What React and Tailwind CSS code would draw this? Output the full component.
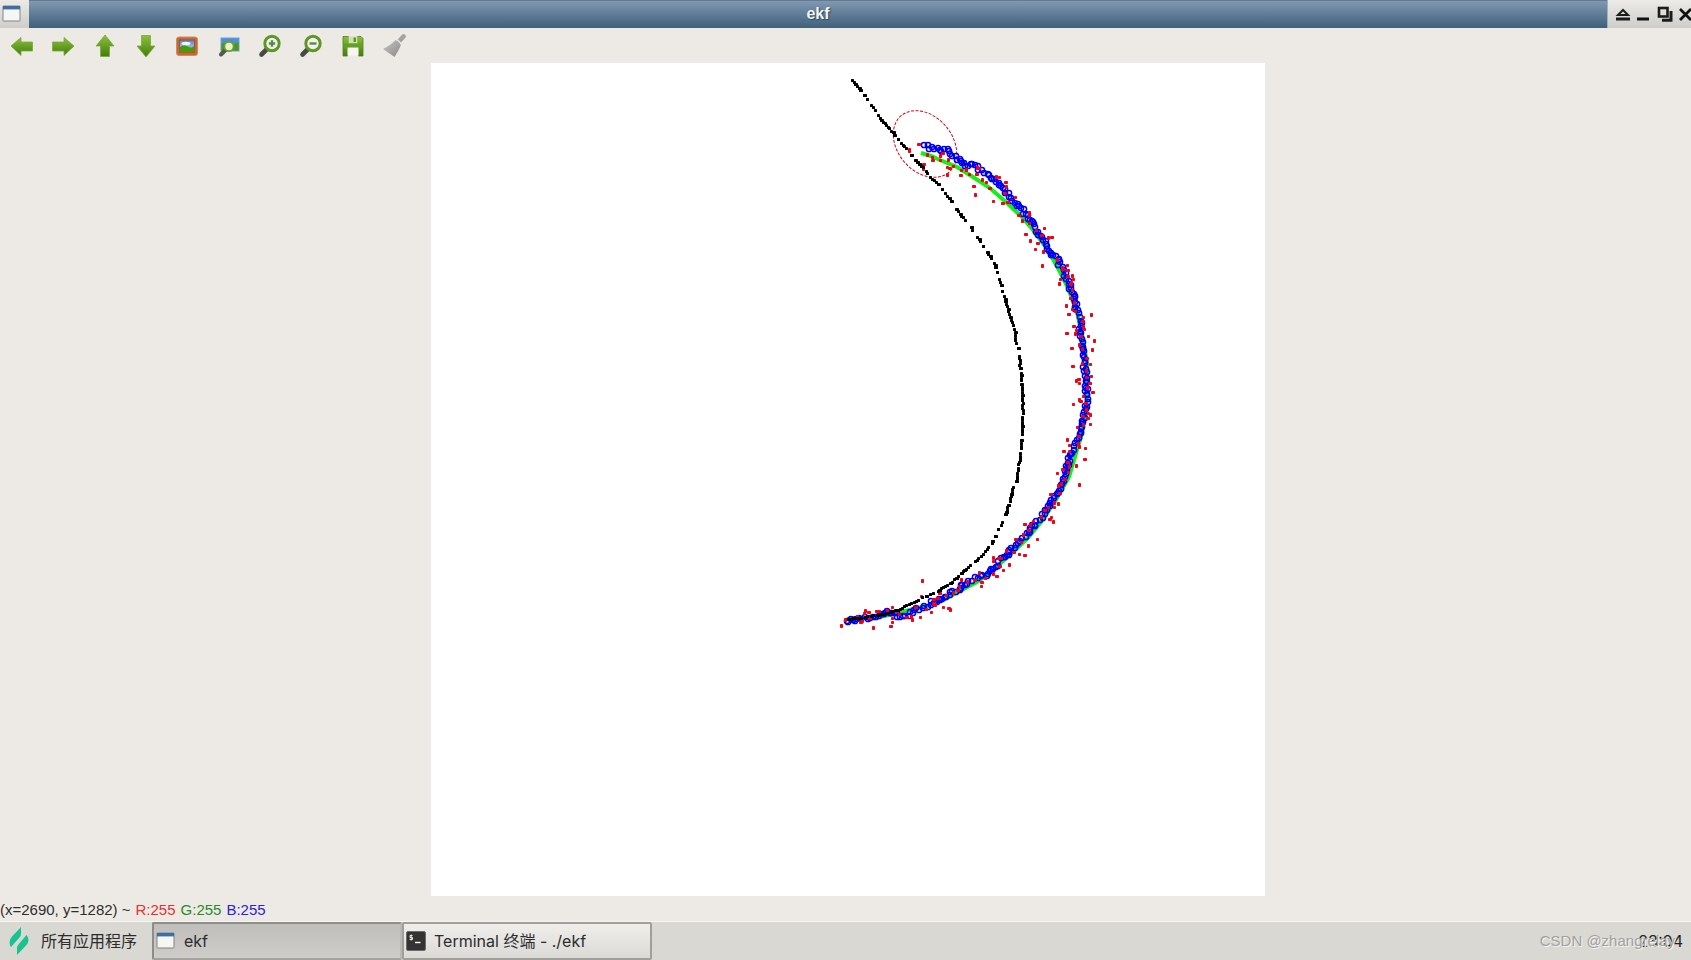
import React from "react";

function mulberry(seed) {
  let a = seed;
  return () => {
    a = (a + 0x6d2b79f5) | 0;
    let t = Math.imul(a ^ (a >>> 15), 1 | a);
    t = (t + Math.imul(t ^ (t >>> 7), 61 | t)) ^ t;
    return ((t ^ (t >>> 14)) >>> 0) / 4294967296;
  };
}

// Walks a polyline and returns points whose spacing is given by step().
function walk(points, step) {
  const out = [];
  let need = 0;
  for (let i = 0; i < points.length - 1; i++) {
    const [x1, y1] = points[i];
    const [x2, y2] = points[i + 1];
    const len = Math.hypot(x2 - x1, y2 - y1);
    let d = need;
    while (d < len) {
      const t = d / len;
      out.push([x1 + (x2 - x1) * t, y1 + (y2 - y1) * t, -(y2 - y1) / len, (x2 - x1) / len]);
      d += step();
    }
    need = d - len;
  }
  return out;
}

const TRUTH = [[921,153],[931,156],[940,160],[957,167],[973,177],[990,188],[1007,203],[1022,217],[1033,230],[1048,250],[1060,272],[1068,288],[1077,312],[1083,340],[1087,363],[1087,387],[1086,413],[1081,437],[1077,450],[1069,477],[1056,500],[1041,522],[1028,538],[1013,552],[990,573],[977,582],[960,591],[943,600],[927,606],[897,613],[880,617],[847,619]];

const ESTIMATE = [[925,144],[928,147],[937,148],[947,150],[955,158],[965,164],[977,167],[990,177],[997,180],[1003,188],[1012,200],[1025,213],[1033,225],[1042,238],[1050,251],[1057,259],[1066,277],[1075,302],[1079,317],[1081,333],[1084,353],[1085,373],[1087,388],[1086,407],[1083,422],[1078,435],[1073,450],[1068,463],[1063,480],[1057,492],[1048,508],[1040,519],[1032,527],[1020,542],[1003,558],[988,574],[977,578],[963,585],[957,590],[943,598],[920,608],[908,614],[898,615],[885,612],[873,617],[860,619],[844,621]];

const DEAD_RECKONING = [
  [852,80,860,90],[864,95,864,95],[867,99,867,99],[871,105,875,110],[878,115,880,118],[881,120,893,132],[894,135,894,135],[898,139,898,139],[901,143,906,148],[911,155,911,155],[915,160,923,167],[926,171,927,173],[930,177,938,184],[942,189,942,189],[945,193,949,198],[951,201,951,201],[956,209,965,220],[971,227,972,230],[977,237,980,241],[983,246,983,246],[987,252,991,258],[994,263,995,267],[997,272,997,272],[999,279,1001,285],[1002,291,1002,291],[1004,296,1009,314],[1010,317,1013,325],[1014,329,1016,343],[1018,348,1018,348],[1019,356,1020,368],[1021,373,1021,380],[1021,384,1023,413],[1022,417,1022,434],[1021,440,1021,448],[1020,453,1020,460],[1019,462,1016,481],[1013,487,1010,501],[1008,505,1005,514],[1002,522,1001,525],[998,529,998,529],[995,536,995,536],[992,541,992,543],[988,547,981,556],[978,558,975,561],[970,565,961,573],[958,576,950,583],[947,585,941,588],[939,590,938,591],[933,593,930,594],[926,596,926,596],[922,597,922,597],[918,600,909,604],[906,605,900,609],[897,610,890,612],[887,613,877,615],[873,615,865,617],[860,618,848,619],
];

const OUTLIERS = [[919,144],[909,149],[909,151],[924,164],[923,168],[947,167],[950,168],[947,174],[961,170],[961,175],[966,169],[969,174],[974,186],[975,194],[993,201],[1003,203],[927,154],[932,157],[933,160],[940,155],[940,160],[943,153],[948,159],[953,166],[977,174],[982,179],[986,182],[990,188],[996,176],[999,177],[1006,182],[1006,186],[1015,197],[1005,193],[1029,212],[1029,215],[1019,215],[1022,220],[1029,223],[1026,234],[1030,240],[1035,249],[1038,243],[1043,251],[1044,228],[1052,237],[1048,237],[1036,230],[1042,235],[977,167],[979,168],[1008,202],[1042,265],[1067,265],[1068,270],[1072,275],[1073,279],[1071,284],[1059,283],[1060,279],[1063,269],[1066,305],[1072,309],[1069,314],[1091,314],[1083,317],[1074,326],[1075,333],[1076,330],[1067,333],[1094,340],[1088,336],[1072,348],[1092,349],[1090,364],[1073,366],[1082,363],[1091,376],[1079,379],[1076,380],[1079,383],[1093,392],[1079,399],[1073,404],[1081,401],[1090,414],[1090,424],[1088,418],[1067,439],[1069,445],[1064,451],[1079,446],[1085,448],[1085,459],[1076,465],[1057,473],[1063,469],[1079,484],[1058,485],[1060,493],[1058,503],[1054,507],[1050,519],[1053,521],[1051,517],[1025,524],[1030,524],[1037,539],[1016,539],[1028,545],[1019,554],[1025,555],[993,557],[993,561],[999,558],[1009,564],[1003,570],[997,576],[979,572],[981,586],[982,582],[922,580],[921,596],[940,593],[961,579],[892,607],[879,611],[865,610],[864,613],[869,612],[873,627],[892,622],[891,626],[912,619],[920,617],[934,599],[935,604],[943,607],[949,608],[950,609],[931,612],[861,622],[841,625],[892,618],[907,617]];

const rnd = mulberry(11);
const BLUE = walk(ESTIMATE, () => 1 + rnd() * 3).map(([x, y, nx, ny]) => {
  const o = (rnd() - 0.5) * 4;
  return [Math.round(x + nx * o), Math.round(y + ny * o)];
});
const RED = OUTLIERS.concat(
  walk(ESTIMATE.slice(15), () => 3 + rnd() * 9).map(([x, y, nx, ny]) => {
    const o = (rnd() - 0.5) * 8;
    return [Math.round(x + nx * o), Math.round(y + ny * o)];
  })
);
const BLACK = DEAD_RECKONING.flatMap(([x1, y1, x2, y2]) => {
  const n = Math.max(1, Math.round(Math.hypot(x2 - x1, y2 - y1) / 2.6));
  return Array.from({ length: n + 1 }, (_, i) => [
    Math.round(x1 + ((x2 - x1) * i) / n + (rnd() - 0.5) * 0.9),
    Math.round(y1 + ((y2 - y1) * i) / n + (rnd() - 0.5) * 0.9),
    rnd() > 0.8 ? 4 : 3,
  ]);
});

function Plot() {
  return (
    <svg viewBox="431 63 834 833" className="block aspect-[834/833] h-full bg-white" role="img" aria-label="ekf">
      <polyline points={TRUTH.join(" ")} fill="none" stroke="#14f014" strokeWidth="4" />
      <ellipse cx="925" cy="144" rx="37" ry="27.4" transform="rotate(50 925 144)" fill="none" stroke="#e00010" strokeWidth="1" strokeDasharray="3 1.5" />
      <g fill="none" stroke="#0000f0" strokeWidth="1.5">
        {BLUE.map(([x, y], i) => <circle key={i} cx={x} cy={y} r="2.6" />)}
      </g>
      <g fill="#f50010">
        {RED.map(([x, y], i) => (
          <rect key={i} x={x - (i % 3 === 0 ? 2 : 1)} y={y - 1} width={i % 3 === 0 ? 4 : 3} height={i % 3 === 1 ? 4 : 3} rx="0.8" />
        ))}
      </g>
      <g fill="#000">
        {BLACK.map(([x, y, w], i) => <rect key={i} x={x - 1} y={y - 1} width={w} height="3" rx="0.6" />)}
      </g>
    </svg>
  );
}

function Gradients() {
  return (
    <svg width="0" height="0" className="absolute" aria-hidden="true">
      <defs>
        <linearGradient id="leaf" x1="0" y1="0" x2="0" y2="1">
          <stop offset="0" stopColor="#8cc03e" />
          <stop offset="1" stopColor="#427d0a" />
        </linearGradient>
        <linearGradient id="sky" x1="0" y1="0" x2="0" y2="1">
          <stop offset="0" stopColor="#4f86cf" />
          <stop offset="1" stopColor="#d5e6f3" />
        </linearGradient>
        <linearGradient id="ash" x1="0" y1="0" x2="1" y2="1">
          <stop offset="0" stopColor="#c4c4c2" />
          <stop offset="1" stopColor="#8b8b89" />
        </linearGradient>
      </defs>
    </svg>
  );
}

function Arrow({ d }) {
  return <path d={d} fill="url(#leaf)" stroke="#76ab35" strokeWidth="0.8" strokeLinejoin="round" />;
}

function Picture() {
  return (
    <>
      <rect x="1.5" y="3" width="21" height="18.5" rx="2.5" fill="#c06a3c" stroke="#d58a5c" />
      <rect x="4.5" y="6" width="15" height="12.5" fill="url(#sky)" stroke="#9c4a22" strokeWidth="0.8" />
      <ellipse cx="11" cy="9.5" rx="4.5" ry="1.8" fill="#f2f7fb" />
      <path d="M5 13 Q9 10.5 13 12.5 T19 12 V18 H5 Z" fill="#4c9a0a" />
    </>
  );
}

function ZoomPicture() {
  return (
    <>
      <rect x="4" y="4" width="18" height="13" fill="#4f8fd0" stroke="#6f9fd6" />
      <path d="M4.5 10 Q9 7 14 9 T21.5 8 V16.5 H4.5 Z" fill="#4c9a0a" />
      <path d="M8.5 16 L4 20.5" stroke="#55564f" strokeWidth="4" strokeLinecap="round" />
      <circle cx="12" cy="12.5" r="4.6" fill="#e9f0d2" stroke="#6ba12f" strokeWidth="1.8" />
    </>
  );
}

function Lens({ plus }) {
  return (
    <>
      <path d="M8.5 15.5 L3.5 20.5" stroke="#484944" strokeWidth="4.6" strokeLinecap="round" />
      <circle cx="14" cy="9.5" r="7.2" fill="#f0f3e6" stroke="#5f9426" strokeWidth="3" />
      <path d={plus ? "M10.8 9.5 H17.2 M14 6.3 V12.7" : "M10.5 9.5 H17.5"} stroke="#56895a" strokeWidth="2.4" />
    </>
  );
}

function Floppy() {
  return (
    <>
      <path d="M2 2.5 H7.5 V9.5 H16.5 V2.5 H20 L22 4.5 V22 H17.5 V13.5 H6.5 V22 H2 Z" fill="url(#leaf)" stroke="#4b8311" strokeWidth="0.8" strokeLinejoin="round" />
      <path d="M7.5 2.5 H16.5 V9.5 H7.5 Z" fill="#cfe0b4" />
      <path d="M12.5 3.5 H15 V8 H12.5 Z" fill="#5c9a20" />
      <path d="M2.5 9.5 H21.5 V13.5 H2.5 Z" fill="#64a022" />
      <path d="M6.5 13.5 H17.5 V21.5 H6.5 Z" fill="#f6f7f3" />
    </>
  );
}

function Broom() {
  return (
    <>
      <path d="M16 8.5 L21.5 2.5" stroke="#a3a3a1" strokeWidth="4.6" strokeLinecap="round" />
      <path d="M13.5 6 L19 11 Q16.5 17 12.5 23 L1 15 Q9 11 13.5 6 Z" fill="url(#ash)" />
      <path d="M14.5 5 L20 10.5" stroke="#e4e4e2" strokeWidth="1.6" />
    </>
  );
}

const TOOLS = [
  ["Pan left", <Arrow d="M1 12 L11 3.5 V8 H22.5 V17 H11 V21.5 Z" />],
  ["Pan right", <Arrow d="M23 12 L13 3.5 V8 H1.5 V17 H13 V21.5 Z" />],
  ["Pan up", <Arrow d="M12 1 L21 12 H16.5 V22.5 H7.5 V12 H3 Z" />],
  ["Pan down", <Arrow d="M12 23 L21 12 H16.5 V1.5 H7.5 V12 H3 Z" />],
  ["Zoom 1:1", <Picture />],
  ["Zoom region", <ZoomPicture />],
  ["Zoom in", <Lens plus />],
  ["Zoom out", <Lens />],
  ["Save", <Floppy />],
  ["Clear", <Broom />],
];

function WindowGlyph() {
  return (
    <svg width="20" height="18" viewBox="0 0 20 18" aria-hidden="true" className="shrink-0">
      <rect x="1" y="1" width="17" height="15" rx="0.5" fill="#f6f6f5" stroke="#808488" />
      <rect x="1" y="1" width="17" height="3.4" fill="#3b6ea8" />
    </svg>
  );
}

function TitleBar() {
  return (
    <header className="flex h-7 shrink-0">
      <button type="button" aria-label="Window menu" className="flex w-[29px] items-center bg-linear-to-b from-[#ecebe8] to-[#cfcdc9] pl-[2px]">
        <WindowGlyph />
      </button>
      <h1 className="flex flex-1 items-center justify-center border-t border-b border-t-[#5f7b96] border-b-[#49606f] bg-linear-to-b from-[#8298b0] to-[#40627e] font-['Liberation_Sans',sans-serif] text-base font-semibold text-[#f2f4f6] [text-shadow:1px_1px_1px_#2c4558]">
        ekf
      </h1>
      <div className="flex w-[84px] items-center justify-end overflow-hidden border-l border-[#9fb0be] bg-linear-to-b from-[#ecebe8] to-[#cfcdc9]">
        <button type="button" aria-label="Shade" className="w-[21px]">
          <svg width="20" height="20" viewBox="0 0 20 20" fill="none" stroke="#1c1c1c" strokeWidth="2">
            <path d="M5 11 L10 6 L15 11 Z" /><path d="M3 15 H17" strokeWidth="3" />
          </svg>
        </button>
        <button type="button" aria-label="Minimize" className="w-[21px]">
          <svg width="20" height="20" viewBox="0 0 20 20"><path d="M3 15 H15" stroke="#111" strokeWidth="3" /></svg>
        </button>
        <button type="button" aria-label="Maximize" className="w-6">
          <svg width="24" height="20" viewBox="0 0 24 20" fill="none" stroke="#1c1c1c">
            <rect x="4" y="4" width="8.5" height="8.5" strokeWidth="2.6" />
            <path d="M16 7 V16.2 H7" strokeWidth="3" />
          </svg>
        </button>
        <button type="button" aria-label="Close" className="w-3">
          <svg width="12" height="20" viewBox="0 0 12 20"><path d="M1 5 L12 16 M12 5 L1 16" stroke="#111" strokeWidth="2.8" /></svg>
        </button>
      </div>
    </header>
  );
}

function Taskbar() {
  return (
    <nav className="flex h-[39px] shrink-0 items-stretch border-t border-[#f7f6f3] bg-[#d9d8d3] text-base text-[#2c2c2c]">
      <button type="button" className="flex w-[152px] items-center gap-3 pl-2 whitespace-nowrap">
        <svg width="21" height="30" viewBox="0 0 21 30" aria-hidden="true" className="shrink-0">
          <path d="M13 1 V8 Q13 10 11.5 11.5 L3 21 Q1.5 19 1.5 16.5 Q1.5 13 4 10.5 Z" fill="#17c48f" />
          <path d="M18.5 9 Q20.5 11 20.5 14 Q20.5 17 18 19.5 L9 29 V22 Q9 20 10.5 18.5 Z" fill="#17c48f" />
        </svg>
        <span>所有应用程序</span>
      </button>
      <button type="button" className="flex w-[250px] items-center gap-2 rounded-xs border-2 border-[#8e8d89] border-r-[#b9b8b4] border-b-[#a3a29e] bg-linear-to-b from-[#bfbeba] to-[#cecdc9] pl-[2px]">
        <WindowGlyph />
        <span>ekf</span>
      </button>
      <button type="button" className="flex w-[250px] items-center gap-2 rounded-xs border-2 border-[#a09f9b] bg-linear-to-b from-[#efeeeb] to-[#dbdad6] pl-[2px]">
        <svg width="20" height="20" viewBox="0 0 20 20" aria-hidden="true" className="shrink-0">
          <rect x="0.5" y="0.5" width="19" height="19" rx="1.5" fill="#333" stroke="#6c6c6c" />
          <path d="M6.5 4.5 H4 V6.5 H6.5 V8.5 H3.6 M5.2 3.5 V9.5" fill="none" stroke="#e8e8e8" strokeWidth="1" />
          <path d="M9 11.5 H14.5" stroke="#fff" strokeWidth="1.4" />
        </svg>
        <span>Terminal 终端 - ./ekf</span>
      </button>
      <div className="relative ml-auto flex items-center pr-2">
        <time className="text-[#222]">23:04</time>
        <span className="absolute right-4 font-['Liberation_Sans',sans-serif] text-[15px] whitespace-nowrap text-[#a2a19f] [text-shadow:1px_1px_0_#f4f4f2]">CSDN @zhangrelay</span>
      </div>
    </nav>
  );
}

export default function App() {
  return (
    <div className="flex h-screen flex-col overflow-hidden bg-[#edeae6] font-[Inter,'Noto_Sans_CJK_SC',sans-serif]">
      <Gradients />
      <TitleBar />
      <div role="toolbar" className="flex h-[35px] w-[406px] shrink-0 items-center justify-between pl-[10px]">
        {TOOLS.map(([label, icon]) => (
          <button key={label} type="button" aria-label={label} className="size-6">
            <svg width="24" height="24" viewBox="0 0 24 24" fill="none">{icon}</svg>
          </button>
        ))}
      </div>
      <main className="flex min-h-0 flex-1 justify-center pl-1">
        <Plot />
      </main>
      <footer className="flex h-[25px] shrink-0 items-center gap-[5px] pt-1 font-['Liberation_Sans',sans-serif] text-[15px] text-[#2e2e2e]">
        <span>(x=2690, y=1282) ~</span>
        <span className="text-[#e83030]">R:255</span>
        <span className="text-[#2a8a2a]">G:255</span>
        <span className="text-[#2c22d8]">B:255</span>
      </footer>
      <Taskbar />
    </div>
  );
}
